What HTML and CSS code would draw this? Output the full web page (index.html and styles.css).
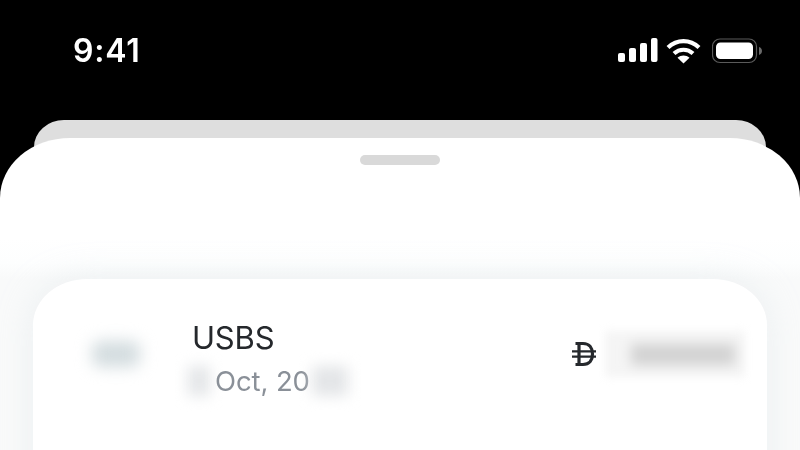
FILE: index.html
```html
<!DOCTYPE html>
<html lang="en">
<head>
<meta charset="utf-8">
<title>USBS</title>
<link rel="stylesheet" href="styles.css">
</head>
<body>
<div class="screen">
  <header class="status">
    <span class="time">9:41</span>
    <div class="indicators">
      <svg class="signal" width="40" height="25" viewBox="0 0 40 25"><rect x="0" y="15" width="7" height="9" rx="2"/><rect x="11" y="10" width="7" height="14" rx="2"/><rect x="22" y="5" width="7" height="19" rx="2"/><rect x="33" y="0" width="6.500" height="24" rx="2"/></svg>
      <svg class="wifi" width="35" height="26" viewBox="0 0 35 26"><path class="arc" d="M2 9.500C11 1 24 1 33 9.500"/><path class="arc" d="M8 15.500C13.500 10.500 21.500 10.500 27 15.500"/><path class="dot" d="M17.500 25.500L11.500 19.800C15 16.800 20 16.800 23.500 19.800Z"/></svg>
      <svg class="battery" width="51" height="26" viewBox="0 0 51 26"><rect class="shell" x="0.500" y="1" width="44" height="23.500" rx="7.500"/><rect class="charge" x="4" y="4.500" width="37" height="16.500" rx="4.500"/><path class="cap" d="M47 9v8c1.800-.6 3-2.200 3-4s-1.200-3.400-3-4Z"/></svg>
    </div>
  </header>
  <div class="back-sheet"></div>
  <main class="front-sheet">
    <div class="handle"></div>
    <section class="card">
      <div class="logo-blur"></div>
      <div class="details">
        <div class="name">USBS</div>
        <div class="date-row">
          <span class="date-blur date-blur-left"></span>
          <span class="date">Oct, 20</span>
          <span class="date-blur date-blur-right"></span>
        </div>
      </div>
      <div class="amount">
        <svg class="dirham" width="26" height="26" viewBox="0 0 26 26"><path class="dirham-d" d="M4.500 2.500H12C18.500 2.500 21.500 7 21.500 13S18.500 23.500 12 23.500H4.500M8 2.500V23.500"/><path class="dirham-bars" d="M1 10.300H25M1 15.700H25"/></svg>
        <div class="amount-blur"><div class="amount-blur-core"></div></div>
      </div>
    </section>
  </main>
</div>
</body>
</html>
```
FILE: styles.css
```css
* { box-sizing: border-box; }
html, body { margin: 0; padding: 0; background: #000; }
.screen { width: 800px; height: 450px; overflow: hidden; background: #000; font-family: Inter, "Liberation Sans", sans-serif; }

.status { height: 120px; padding: 38px 37px 0 73px; display: flex; justify-content: space-between; align-items: flex-start; }
.time { color: #fff; font-size: 32px; font-weight: 600; line-height: 26px; letter-spacing: .8px; filter: blur(.3px); }
.indicators { display: flex; align-items: flex-start; gap: 8px; }
.signal { fill: #fff; }
.wifi .arc { fill: none; stroke: #fff; stroke-width: 4.200; }
.wifi .dot { fill: #fff; }
.battery { margin-left: 3px; }
.shell { fill: none; stroke: #5a5a5a; stroke-width: 1.200; }
.charge { fill: #fff; }
.cap { fill: #6a6a6a; }

.back-sheet { height: 40px; margin: 0 34px -22px; background: #dedede; border-radius: 30px 30px 0 0 / 27px 27px 0 0; }
.front-sheet { position: relative; height: 312px; padding-top: 17px; background: linear-gradient(#fff 0, #fff 100px, #fdfefe 125px, #f9fafa 141px); border-radius: 70px 70px 0 0 / 60px 60px 0 0; }
.handle { width: 80px; height: 10px; margin: 0 auto; background: #d9d9d9; border-radius: 5px; }

.card { height: 220px; margin: 114px 33px 0; padding: 41px 22px 0 59px; display: flex; align-items: flex-start; background: #fff; border-radius: 54px 54px 0 0 / 46px 46px 0 0; box-shadow: 0 0 34px rgba(214, 224, 228, .38); }
.logo-blur { width: 48px; height: 26px; margin: 21px 52px 0 0; background: #d3dcdf; border-radius: 8px; filter: blur(8px); }
.details { display: flex; flex-direction: column; }
.name { color: #25282c; font-size: 31px; font-weight: 400; line-height: 36px; letter-spacing: -.2px; filter: blur(.3px); }
.date-row { display: flex; align-items: center; margin: 8px 0 0 -4px; }
.date { color: #8a9098; font-size: 27.500px; line-height: 34px; letter-spacing: -.1px; white-space: nowrap; filter: blur(.3px); }
.date-blur { display: block; height: 30px; background: #e4e6e8; filter: blur(7px); }
.date-blur-left { width: 22px; margin-right: 5px; }
.date-blur-right { width: 36px; margin-left: 2px; }
.amount { margin-left: auto; display: flex; align-items: center; gap: 8px; padding-top: 11px; }
.dirham-d { fill: none; stroke: #25282c; stroke-width: 3.200; }
.dirham-bars { fill: none; stroke: #25282c; stroke-width: 2.200; }
.amount-blur { width: 140px; height: 46px; padding: 13px 10px 12px 26px; background: #f5f5f5; filter: blur(4px); }
.amount-blur-core { height: 100%; background: #d2d2d2; filter: blur(4px); }
```
